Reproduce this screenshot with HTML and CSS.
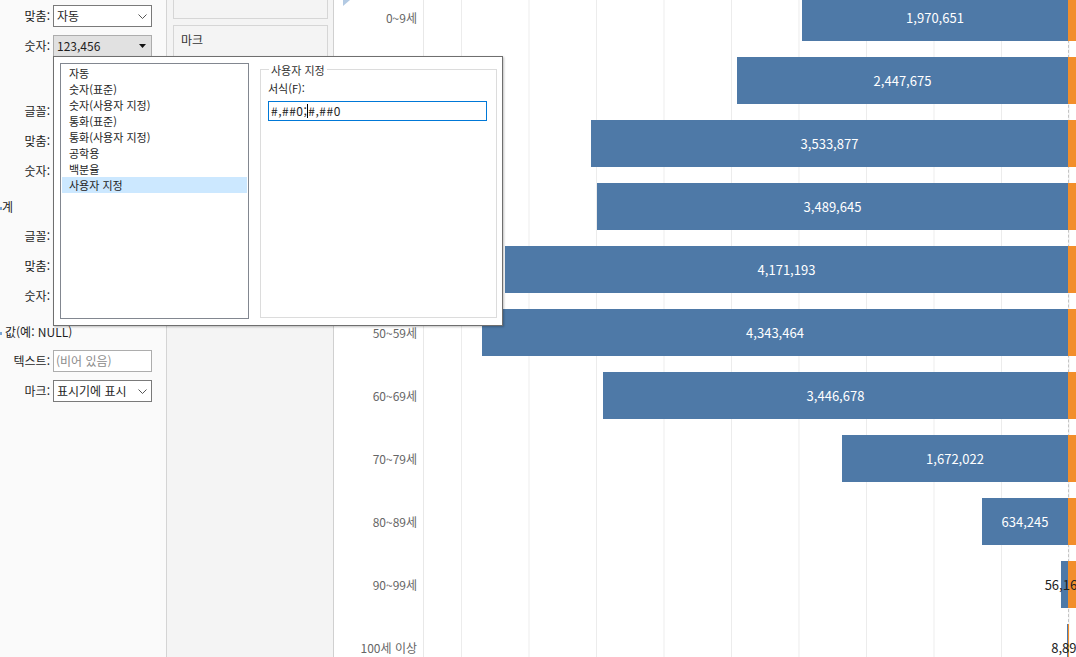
FILE: index.html
```html
<!DOCTYPE html>
<html lang="ko">
<head>
  <meta charset="UTF-8" />
  <meta name="viewport" content="width=device-width, initial-scale=1.0"/>
  <title>서식 - 연령대별 인구</title>
  <link rel="stylesheet" href="styles.css">
</head>
<body>
  <div class="app">
    <aside class="format-pane">
      <div class="field">
        <span class="field-label">맞춤:</span>
        <div class="select">자동<svg class="chevron" width="9" height="5" viewBox="0 0 9 5"><polyline points="0.5,0.5 4.5,4.5 8.5,0.5"/></svg></div>
      </div>
      <div class="field">
        <span class="field-label">숫자:</span>
        <div class="select select-open">123,456<svg width="7" height="4" viewBox="0 0 7 4"><polygon points="0,0 7,0 3.5,4" fill="#111"/></svg></div>
      </div>

      <div class="section"></div>
      <div class="field"><span class="field-label">글꼴:</span><div class="select">Tableau Book</div></div>
      <div class="field"><span class="field-label">맞춤:</span><div class="select">자동</div></div>
      <div class="field"><span class="field-label">숫자:</span><div class="select">자동</div></div>

      <div class="section"><span class="tick"></span>계</div>
      <div class="field"><span class="field-label">글꼴:</span><div class="select">Tableau Book</div></div>
      <div class="field"><span class="field-label">맞춤:</span><div class="select">자동</div></div>
      <div class="field"><span class="field-label">숫자:</span><div class="select">자동</div></div>

      <div class="section section-null"><span class="tick"></span>값(예: NULL)</div>
      <div class="field">
        <span class="field-label">텍스트:</span>
        <div class="text-box">(비어 있음)</div>
      </div>
      <div class="field">
        <span class="field-label">마크:</span>
        <div class="select">표시기에 표시<svg class="chevron" width="9" height="5" viewBox="0 0 9 5"><polyline points="0.5,0.5 4.5,4.5 8.5,0.5"/></svg></div>
      </div>
    </aside>

    <section class="cards">
      <div class="card card-top"></div>
      <div class="card card-marks"><div class="card-title">마크</div></div>
    </section>

    <main class="chart">
      <svg class="sort-mark" width="8" height="7" viewBox="0 0 8 7"><polygon points="0,0 7,0 0,6"/></svg>
      <div class="zero-line"></div>
      <div class="rows">
        <div class="row"><div class="row-label">0~9세</div><div class="plot"><div class="bar" style="width:266px"><span>1,970,651</span></div><div class="bar-rest"></div></div></div>
        <div class="row"><div class="row-label">10~19세</div><div class="plot"><div class="bar" style="width:331px"><span>2,447,675</span></div><div class="bar-rest"></div></div></div>
        <div class="row"><div class="row-label">20~29세</div><div class="plot"><div class="bar" style="width:477px"><span>3,533,877</span></div><div class="bar-rest"></div></div></div>
        <div class="row"><div class="row-label">30~39세</div><div class="plot"><div class="bar" style="width:471px"><span>3,489,645</span></div><div class="bar-rest"></div></div></div>
        <div class="row"><div class="row-label">40~49세</div><div class="plot"><div class="bar" style="width:563px"><span>4,171,193</span></div><div class="bar-rest"></div></div></div>
        <div class="row"><div class="row-label">50~59세</div><div class="plot"><div class="bar" style="width:586px"><span>4,343,464</span></div><div class="bar-rest"></div></div></div>
        <div class="row"><div class="row-label">60~69세</div><div class="plot"><div class="bar" style="width:465px"><span>3,446,678</span></div><div class="bar-rest"></div></div></div>
        <div class="row"><div class="row-label">70~79세</div><div class="plot"><div class="bar" style="width:226px"><span>1,672,022</span></div><div class="bar-rest"></div></div></div>
        <div class="row"><div class="row-label">80~89세</div><div class="plot"><div class="bar" style="width:86px"><span>634,245</span></div><div class="bar-rest"></div></div></div>
        <div class="row"><div class="row-label">90~99세</div><div class="plot"><div class="bar bar-small" style="width:7px"><span>56,164</span></div><div class="bar-rest"></div></div></div>
        <div class="row"><div class="row-label">100세 이상</div><div class="plot"><div class="bar bar-small" style="width:1px"><span>8,893</span></div><div class="bar-rest bar-rest-thin"></div></div></div>
      </div>
    </main>

    <div class="popup">
      <ul class="type-list">
        <li>자동</li>
        <li>숫자(표준)</li>
        <li>숫자(사용자 지정)</li>
        <li>통화(표준)</li>
        <li>통화(사용자 지정)</li>
        <li>공학용</li>
        <li>백분율</li>
        <li class="selected">사용자 지정</li>
      </ul>
      <div class="group">
        <div class="group-title">사용자 지정</div>
        <label class="group-label">서식(F):</label>
        <div class="format-input">#,##0;<span class="caret"></span>#,##0</div>
      </div>
    </div>
  </div>
</body>
</html>
```

FILE: styles.css
```css
* {
  box-sizing: border-box;
}
html, body {
  margin: 0;
  height: 100%;
  overflow: hidden;
}
body {
  font-family: "Noto Sans CJK KR", "Noto Sans", sans-serif;
  font-size: 12px;
  line-height: 16px;
  color: #1e1e1e;
  background: #fff;
}
.app {
  display: flex;
  height: 657px;
  position: relative;
}

/* left format pane */
.format-pane {
  width: 167px;
  flex: none;
  background: #fafafa;
  border-right: 1px solid #d4d4d4;
  padding-top: 1px;
}
.field {
  display: flex;
  align-items: center;
  height: 30px;
}
.field-label {
  width: 50px;
  text-align: right;
}
.select, .text-box {
  margin-left: 3px;
  width: 99px;
  height: 22px;
  border: 1px solid #7a7a7a;
  background: #fff;
  display: flex;
  align-items: center;
  justify-content: space-between;
  padding: 0 4px 0 3px;
  white-space: nowrap;
}
.select-open {
  background: #e1e1e1;
  border-color: #adadad;
  padding-right: 5px;
}
.text-box {
  border-color: #adadad;
  color: #8c8c8c;
  padding-left: 2px;
}
.chevron polyline {
  fill: none;
  stroke: #555;
  stroke-width: 1;
}
.section {
  height: 35px;
  padding-top: 7px;
  line-height: 28px;
  padding-left: 2px;
}
.section-null {
  padding-left: 4px;
}
.tick {
  display: inline-block;
  width: 2px;
  height: 3px;
  margin-left: -2px;
  background: #7aa6d6;
  vertical-align: middle;
}
.section-null .tick {
  margin-left: -4px;
  margin-right: 3px;
}

/* middle cards column */
.cards {
  width: 167px;
  flex: none;
  background: #f4f4f4;
  border-right: 1px solid #d0d0d0;
  padding: 0 5px 0 6px;
}
.card {
  border: 1px solid #d6d6d6;
  background: #f4f4f4;
}
.card-top {
  height: 40px;
  margin-top: -21px;
}
.card-marks {
  margin-top: 6px;
  height: 220px;
  padding: 6px 7px;
}
.card-title {
  color: #333;
}

/* chart */
.chart {
  flex: 1;
  position: relative;
  background-image: linear-gradient(to right, #ececec 1px, transparent 1px);
  background-size: 67.5px 100%;
  background-position: 127px 0;
}
.sort-mark {
  position: absolute;
  left: 9px;
  top: 0;
  fill: #b3cae3;
  z-index: 2;
}
.zero-line {
  position: absolute;
  top: 0;
  bottom: 0;
  left: 734px;
  border-left: 1px dashed #c4c4c4;
}
.rows {
  margin-top: -14px;
}
.row {
  display: flex;
  height: 63px;
}
.row-label {
  width: 90px;
  flex: none;
  background: #fff;
  border-right: 1px solid #e8e8e8;
  text-align: right;
  padding-right: 6px;
  color: #666;
  line-height: 63px;
  white-space: nowrap;
}
.plot {
  flex: 1;
  display: flex;
  justify-content: flex-end;
  align-items: center;
}
.bar {
  height: 47px;
  background: #4e79a7;
  display: flex;
  align-items: center;
  justify-content: center;
  color: #fff;
  font-size: 13px;
  white-space: nowrap;
  position: relative;
  z-index: 1;
}
.bar-small {
  color: #222;
  z-index: 2;
}
.bar-rest {
  height: 47px;
  width: 8px;
  flex: none;
  background: #f28e2b;
  position: relative;
  z-index: 1;
}
.bar-rest-thin {
  width: 1px;
  margin-right: 7px;
}

/* number format popup */
.popup {
  position: absolute;
  left: 53px;
  top: 56px;
  width: 450px;
  height: 270px;
  background: #fff;
  border: 1px solid #6f6f6f;
  box-shadow: 1px 1px 2px rgba(0,0,0,0.25);
  display: flex;
  align-items: flex-start;
  gap: 11px;
  padding: 6px 5px 0 6px;
  font-size: 11px;
  z-index: 5;
}
.type-list {
  width: 189px;
  height: 256px;
  flex: none;
  list-style: none;
  margin: 0;
  padding: 1px;
  border: 1px solid #828790;
}
.type-list li {
  height: 16px;
  line-height: 16px;
  padding-left: 7px;
  white-space: nowrap;
}
.type-list li.selected {
  background: #cce8ff;
}
.group {
  flex: 1;
  margin-top: 6px;
  height: 249px;
  border: 1px solid #dcdcdc;
  padding: 0 9px 0 7px;
}
.group-title {
  width: fit-content;
  margin: -8px 0 0 1px;
  padding: 0 2px;
  background: #fff;
  color: #333;
}
.group-label {
  display: block;
  margin-top: 2px;
}
.format-input {
  margin-top: 5px;
  width: 219px;
  height: 20px;
  border: 1px solid #0078d7;
  padding: 0 2px;
  display: flex;
  align-items: center;
  font-size: 12px;
  letter-spacing: 0.5px;
  white-space: nowrap;
}
.caret {
  display: inline-block;
  width: 1px;
  height: 14px;
  background: #000;
}
```
